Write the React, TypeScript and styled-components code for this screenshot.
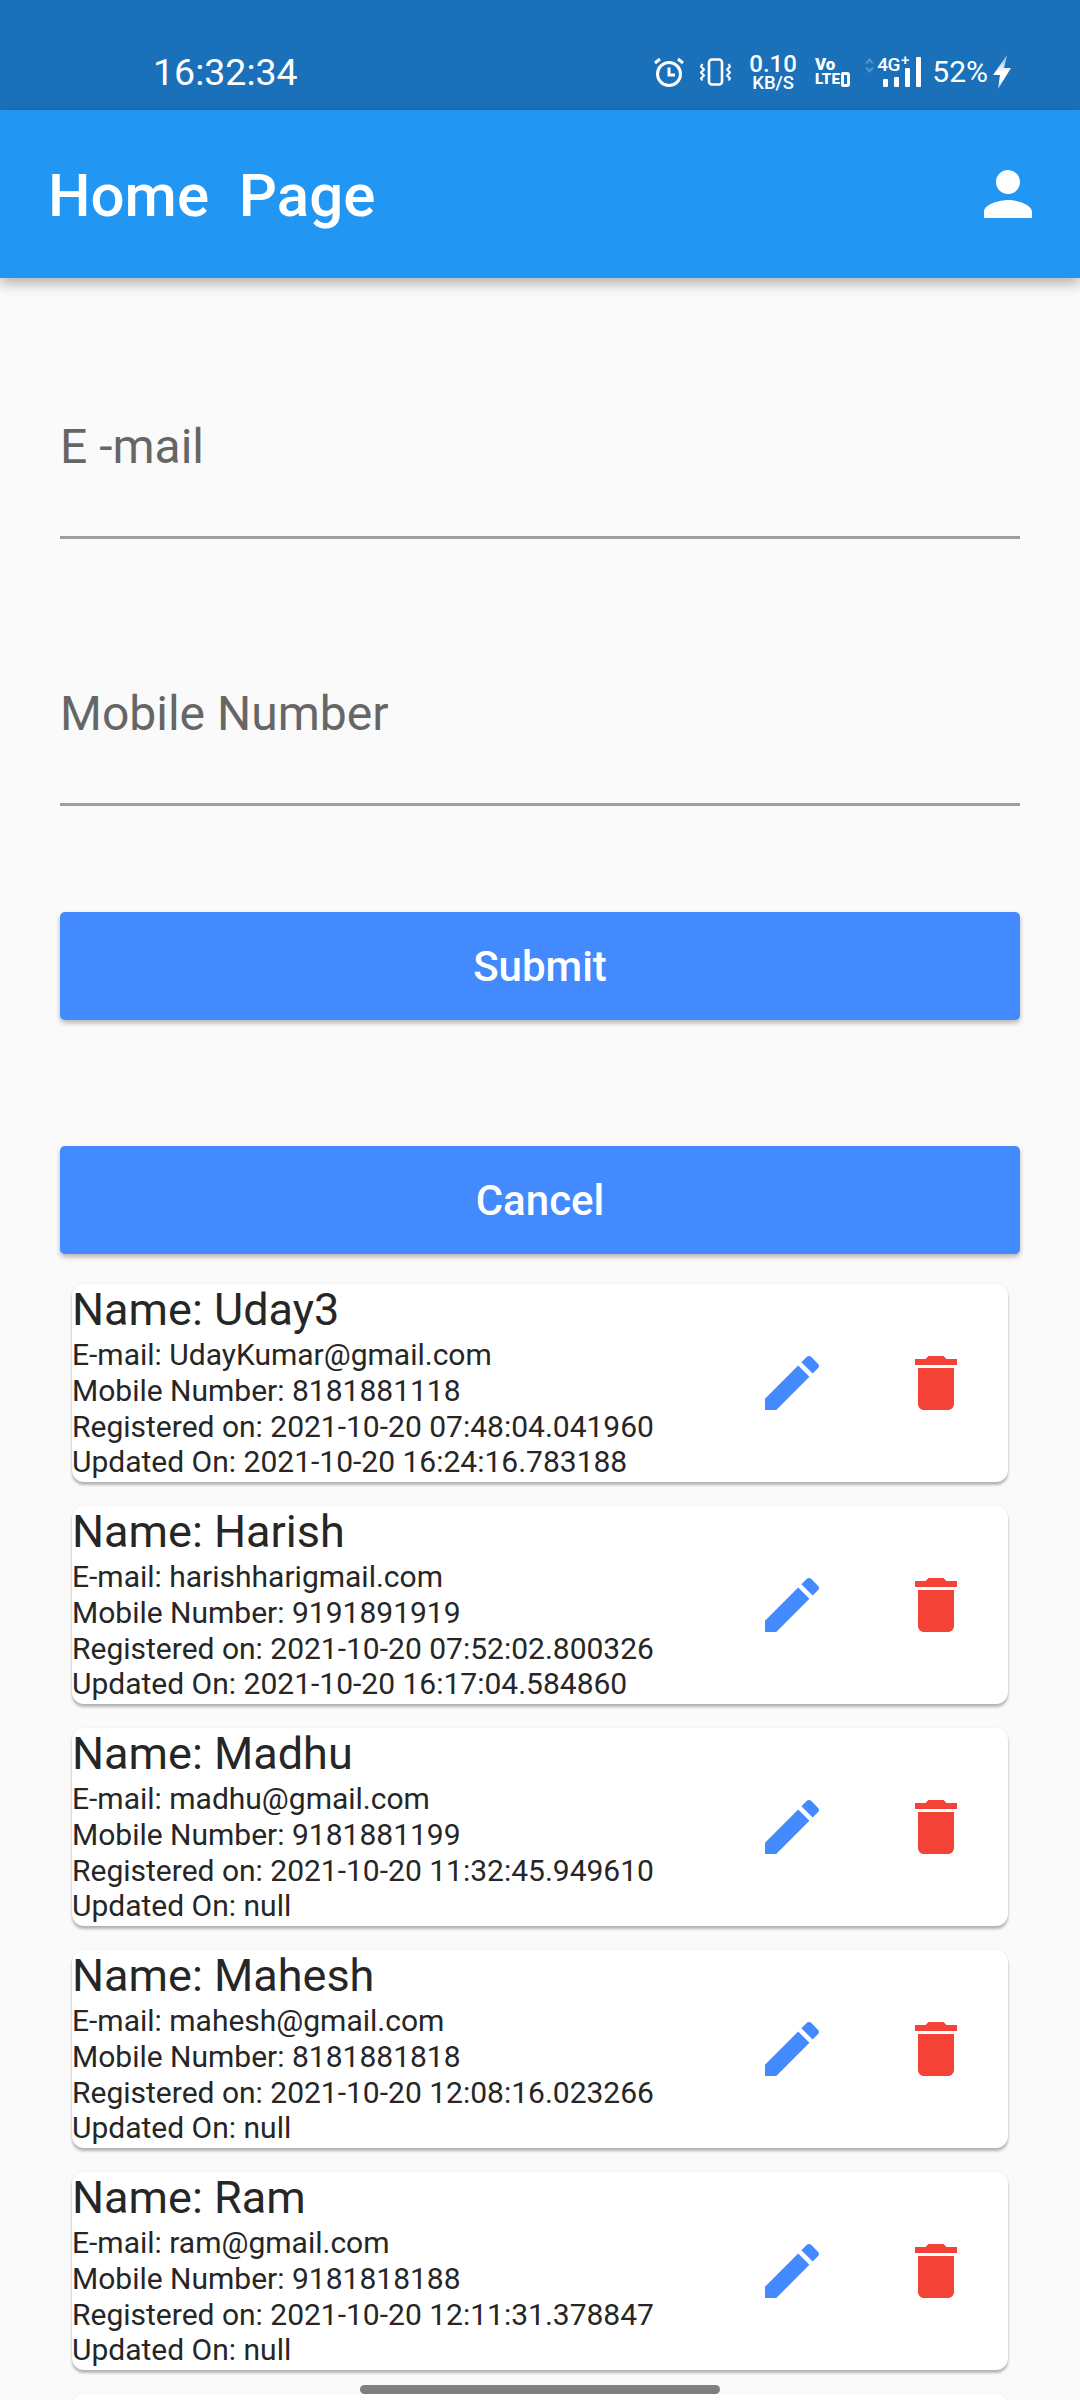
import { createGlobalStyle } from "styled-components";
import styled from "styled-components";

const GlobalStyle = createGlobalStyle`
  html, body {
    margin: 0;
    padding: 0;
    background: #fafafa;
  }
  body {
    font-family: Roboto, "Liberation Sans", sans-serif;
    -webkit-font-smoothing: antialiased;
  }
`;

const Screen = styled.div`
  position: relative;
  width: 1080px;
  height: 2400px;
  overflow: hidden;
  background: #fafafa;
`;

const StatusBar = styled.div`
  height: 110px;
  background: #1a70b9;
  color: #fff;
  display: flex;
  align-items: center;
  justify-content: space-between;
  padding: 34px 69px 0 153px;
  box-sizing: border-box;
`;

const Clock = styled.div`
  font-size: 37.5px;
  line-height: 44px;
`;

const StatusIcons = styled.div`
  display: flex;
  align-items: center;
`;

const Vibrate = styled.svg`
  margin-left: 16px;
`;

const Speed = styled.div`
  display: flex;
  flex-direction: column;
  align-items: center;
  margin-left: 18px;
  font-weight: 500;
  font-size: 24px;
  line-height: 21px;
  small {
    font-size: 18.5px;
    line-height: 15px;
    margin-top: 1px;
  }
`;

const Volte = styled.div`
  display: flex;
  flex-direction: column;
  margin-left: 18px;
  font-size: 17px;
  font-weight: 900;
  line-height: 15px;
`;

const LteRow = styled.span`
  display: flex;
  align-items: center;
  gap: 1px;
  font-size: 15px;
  letter-spacing: 0.3px;
`;

const LteBox = styled.i`
  display: block;
  width: 3px;
  height: 9px;
  border: 3px solid #fff;
  border-radius: 2px 3px 3px 2px;
`;

const Arrows = styled.svg`
  margin-left: 15px;
  margin-bottom: 14px;
`;

const Network = styled.div`
  position: relative;
  width: 44px;
  height: 30px;
  margin-left: 3px;
  display: flex;
  justify-content: flex-end;
`;

const NetworkLabel = styled.span`
  position: absolute;
  left: 0;
  top: -2px;
  font-size: 19px;
  font-weight: 500;
  line-height: 20px;
  letter-spacing: -0.5px;
  sup {
    font-size: 15px;
    line-height: 10px;
    vertical-align: 6px;
    margin-left: 1px;
  }
`;

const Battery = styled.div`
  font-size: 30px;
  line-height: 30px;
  margin-left: 11px;
`;

const Bolt = styled.svg`
  margin-left: 5px;
`;

const AppBar = styled.header`
  height: 168px;
  background: #2196f3;
  color: #fff;
  display: flex;
  align-items: center;
  justify-content: space-between;
  padding: 0 36px 0 48px;
  box-shadow: 0 6px 12px rgba(0, 0, 0, 0.28);
  position: relative;
`;

const Title = styled.h1`
  margin: 2px 0 0;
  font-size: 60px;
  font-weight: 500;
  white-space: pre;
`;

const Form = styled.div`
  padding: 0 60px;
  display: flex;
  flex-direction: column;
`;

const Field = styled.div<{ $top: number }>`
  margin-top: ${(p) => p.$top}px;
  height: 120px;
  border-bottom: 3px solid #9e9e9e;
  box-sizing: border-box;
  color: #666;
  font-size: 48px;
  line-height: 56px;
`;

const PrimaryButton = styled.button<{ $top: number }>`
  margin-top: ${(p) => p.$top}px;
  height: 108px;
  border: 0;
  border-radius: 5px;
  background: #448aff;
  color: #fff;
  font-family: inherit;
  font-size: 42px;
  font-weight: 500;
  box-shadow: 0 3px 5px rgba(0, 0, 0, 0.28);
`;

const List = styled.div`
  margin-top: 30px;
  padding: 0 72px;
  display: flex;
  flex-direction: column;
  gap: 24px;
`;

const Card = styled.div`
  height: 198px;
  flex: none;
  box-sizing: border-box;
  background: #fff;
  border-radius: 12px;
  box-shadow: 0 3px 3px rgba(0, 0, 0, 0.28), 0 0 2px rgba(0, 0, 0, 0.08);
  display: flex;
  align-items: center;
  justify-content: space-between;
  padding-right: 12px;
  overflow: hidden;
`;

const Info = styled.div`
  color: #262626;
  font-size: 30px;
  line-height: 35.7px;
`;

const Name = styled.div`
  font-size: 45px;
  line-height: 51px;
  margin: -2px 0 2px;
`;

const Actions = styled.div`
  display: flex;
  gap: 24px;
`;

const IconButton = styled.div`
  width: 120px;
  height: 120px;
  display: flex;
  align-items: center;
  justify-content: center;
`;

const HomeBar = styled.div`
  position: absolute;
  left: 360px;
  bottom: 6px;
  width: 360px;
  height: 9px;
  border-radius: 5px;
  background: #7f7f7f;
`;

function Icon({ d, color, size = 72 }: { d: string; color: string; size?: number }) {
  return (
    <svg width={size} height={size} viewBox="0 0 24 24" fill={color}>
      <path d={d} />
    </svg>
  );
}

const PERSON = "M12 12c2.21 0 4-1.79 4-4s-1.79-4-4-4-4 1.79-4 4 1.79 4 4 4zm0 2c-2.67 0-8 1.34-8 4v2h16v-2c0-2.66-5.33-4-8-4z";
const EDIT = "M3 17.25V21h3.75L17.81 9.94l-3.75-3.75L3 17.25zM20.71 7.04c.39-.39.39-1.02 0-1.41l-2.34-2.34c-.39-.39-1.02-.39-1.41 0l-1.83 1.83 3.75 3.75 1.83-1.83z";
const TRASH = "M6 19c0 1.1.9 2 2 2h8c1.1 0 2-.9 2-2V7H6v12zM19 4h-3.5l-1-1h-5l-1 1H5v2h14V4z";

const users = [
  { name: "Uday3", email: "UdayKumar@gmail.com", mobile: "8181881118", registered: "2021-10-20 07:48:04.041960", updated: "2021-10-20 16:24:16.783188" },
  { name: "Harish", email: "harishharigmail.com", mobile: "9191891919", registered: "2021-10-20 07:52:02.800326", updated: "2021-10-20 16:17:04.584860" },
  { name: "Madhu", email: "madhu@gmail.com", mobile: "9181881199", registered: "2021-10-20 11:32:45.949610", updated: "null" },
  { name: "Mahesh", email: "mahesh@gmail.com", mobile: "8181881818", registered: "2021-10-20 12:08:16.023266", updated: "null" },
  { name: "Ram", email: "ram@gmail.com", mobile: "9181818188", registered: "2021-10-20 12:11:31.378847", updated: "null" },
];

export default function App() {
  return (
    <Screen>
      <GlobalStyle />
      <StatusBar>
        <Clock>16:32:34</Clock>
        <StatusIcons>
          <svg width="30" height="30" viewBox="0 0 30 30" fill="none" stroke="#fff" strokeWidth="3">
            <circle cx="15" cy="17" r="11.5" />
            <path d="M15 10.5v7.5h6M1 6l5-4M29 6l-5-4" />
          </svg>
          <Vibrate width="31" height="28" viewBox="0 0 31 28" fill="none" stroke="#fff" strokeWidth="2.6">
            <rect x="9" y="1.5" width="13" height="25" rx="3" />
            <path d="M2.5 6l-1.5 2.5 3 3-3 3 3 3-3 3 1.5 2M28.5 6l1.5 2.5-3 3 3 3-3 3 3 3-1.5 2" strokeWidth="2" />
          </Vibrate>
          <Speed>
            0.10
            <small>KB/S</small>
          </Speed>
          <Volte>
            <span>Vo</span>
            <LteRow>
              LTE
              <LteBox />
            </LteRow>
          </Volte>
          <Arrows width="9" height="15" viewBox="0 0 9 15" fill="#5c97cf">
            <path d="M4.5 0L9 5.5H6.5L4.5 3 2.5 5.5H0zM4.5 15L0 9.5h2.5L4.5 12l2-2.5H9z" />
          </Arrows>
          <Network>
            <NetworkLabel>
              4G<sup>+</sup>
            </NetworkLabel>
            <svg width="38" height="30" viewBox="0 0 38 30" fill="#fff">
              <rect x="0" y="22" width="5" height="8" rx="1" />
              <rect x="11" y="20" width="5" height="10" rx="1" />
              <rect x="22" y="11" width="5" height="19" rx="1" />
              <rect x="33" y="0" width="5" height="30" rx="1" />
            </svg>
          </Network>
          <Battery>52%</Battery>
          <Bolt width="18" height="34" viewBox="0 0 18 34">
            <defs>
              <linearGradient id="boltFill" x1="0" y1="0" x2="0" y2="1">
                <stop offset="0.15" stopColor="#a3c5e6" />
                <stop offset="0.5" stopColor="#ffffff" />
                <stop offset="0.75" stopColor="#ffffff" />
                <stop offset="1" stopColor="#a3c5e6" />
              </linearGradient>
            </defs>
            <path d="M14 0L0 20h7L5 34l13-21h-7z" fill="url(#boltFill)" />
          </Bolt>
        </StatusIcons>
      </StatusBar>
      <AppBar>
        <Title>Home  Page</Title>
        <Icon d={PERSON} color="#fff" />
      </AppBar>
      <Form>
        <Field $top={141}>E -mail</Field>
        <Field $top={147}>Mobile Number</Field>
        <PrimaryButton $top={106}>Submit</PrimaryButton>
        <PrimaryButton $top={126}>Cancel</PrimaryButton>
      </Form>
      <List>
        {users.map((u) => (
          <Card key={u.name}>
            <Info>
              <Name>Name: {u.name}</Name>
              <div>E-mail: {u.email}</div>
              <div>Mobile Number: {u.mobile}</div>
              <div>Registered on: {u.registered}</div>
              <div>Updated On: {u.updated}</div>
            </Info>
            <Actions>
              <IconButton>
                <Icon d={EDIT} color="#448aff" />
              </IconButton>
              <IconButton>
                <Icon d={TRASH} color="#f44336" />
              </IconButton>
            </Actions>
          </Card>
        ))}
        <Card />
      </List>
      <HomeBar />
    </Screen>
  );
}
